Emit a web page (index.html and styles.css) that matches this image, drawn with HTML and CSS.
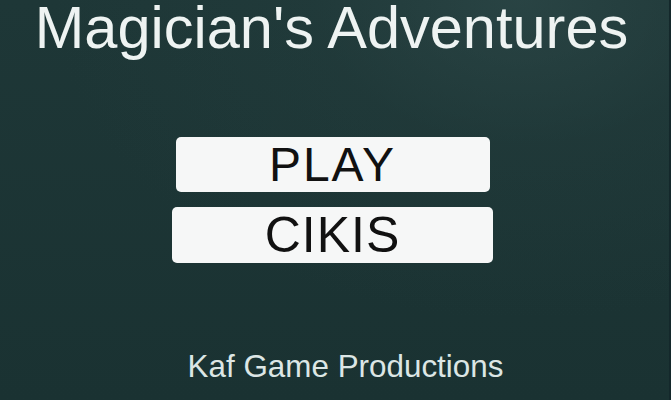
FILE: index.html
```html
<!DOCTYPE html>
<html>
<head>
<meta charset="utf-8">
<link rel="stylesheet" href="styles.css">
</head>
<body>
<div class="screen">
  <h1 class="title">Magician's Adventures</h1>
  <div class="menu">
    <button class="btn btn-play">PLAY</button>
    <button class="btn btn-exit">CIKIS</button>
  </div>
  <div class="footer">Kaf Game Productions</div>
</div>
</body>
</html>
```
FILE: styles.css
```css
html, body {
  margin: 0;
  padding: 0;
}
body {
  width: 671px;
  height: 400px;
  overflow: hidden;
  font-family: "Liberation Sans", Arial, sans-serif;
}
.screen {
  width: 671px;
  height: 400px;
  box-sizing: border-box;
  display: flex;
  flex-direction: column;
  align-items: center;
  background:
    radial-gradient(ellipse 70% 80% at 78% 0%, rgba(50, 78, 78, 0.55) 0%, rgba(40, 66, 66, 0.25) 45%, rgba(28, 52, 52, 0) 100%),
    linear-gradient(180deg, #1e3737 0%, #1a3232 100%);
  border-right: 2px solid #14282b;
}
.title {
  margin: 0 0 0 -6px;
  font-weight: normal;
  font-size: 59.5px;
  line-height: 56px;
  color: #eef3f2;
  white-space: nowrap;
}
.menu {
  margin-top: 81px;
  display: flex;
  flex-direction: column;
  align-items: center;
  gap: 15px;
  margin-left: -4px;
}
.btn {
  display: flex;
  align-items: center;
  justify-content: center;
  border: none;
  border-radius: 5px;
  background: #f6f7f7;
  color: #111;
  font-family: "Liberation Sans", Arial, sans-serif;
  line-height: 1;
  padding: 0;
}
.btn-play {
  width: 314px;
  height: 55px;
  font-size: 48px;
  letter-spacing: 2px;
}
.btn-exit {
  width: 321px;
  height: 56px;
  font-size: 50px;
  letter-spacing: 1px;
}
.footer {
  margin-top: 89px;
  margin-left: 22px;
  font-size: 31.4px;
  line-height: 30px;
  color: #dce6e5;
  white-space: nowrap;
}
```
